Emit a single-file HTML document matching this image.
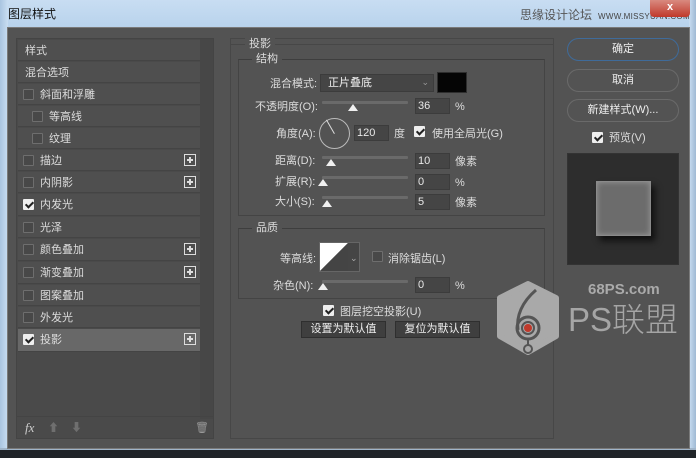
<!DOCTYPE html>
<html><head><meta charset="utf-8">
<style>
*{margin:0;padding:0;box-sizing:border-box}
body{width:696px;height:458px;overflow:hidden;background:#1c1c1c;font-family:"Liberation Sans","Noto Sans CJK SC",sans-serif;font-size:11px;color:#dcdcdc;position:relative}
.a{position:absolute}
.t{position:absolute;white-space:nowrap;line-height:14px}
.row{position:absolute;left:18px;width:182px;height:21px;background:#4f4f4f;border-bottom:1px solid #444}
.row span{position:absolute;top:4px;line-height:14px;white-space:nowrap}
.cb{position:absolute;width:11px;height:11px;border:1px solid #6e6e6e;background:#484848;border-radius:1px}
.cb.on{background:#eee;border-color:#eee}
.cb.on:after{content:"";position:absolute;left:3px;top:0px;width:3px;height:6px;border:solid #222;border-width:0 2px 2px 0;transform:rotate(45deg)}
.plus{position:absolute;right:4px;top:4px;width:12px;height:12px;border:1px solid #ddd}
.plus:before{content:"";position:absolute;left:2px;top:4px;width:6px;height:2px;background:#ddd}
.plus:after{content:"";position:absolute;left:4px;top:2px;width:2px;height:6px;background:#ddd}
.inp{position:absolute;background:#454545;border:1px solid #3c3c3c;height:16px;width:37px;line-height:14px;padding-left:2px;color:#e8e8e8}
.track{position:absolute;height:3px;background:#6a6a6a;width:86px;border-radius:1px}
.knob{position:absolute;width:0;height:0;border-left:5px solid transparent;border-right:5px solid transparent;border-bottom:7px solid #f0f0f0}
.btn{position:absolute;left:567px;width:112px;height:23px;border:1px solid #6a6a6a;border-radius:12px;text-align:center;line-height:21px;color:#eee}
.fs{position:absolute;border:1px solid #444;border-top-color:#3e3e3e}
.leg{position:absolute;background:#535353;padding:0 4px;line-height:14px}
.gb{position:absolute;height:17px;background:#3f3f3f;border:1px solid #2f2f2f;text-align:center;line-height:15px;color:#eee}
</style></head><body>
<div class="a" style="left:0;top:0;width:696px;height:30px;background:linear-gradient(#c8ddf2,#b7d2ec)"></div>
<div class="a" style="left:0;top:0;width:8px;height:452px;background:linear-gradient(90deg,#a9c4e0,#c9def2)"></div>
<div class="a" style="left:689px;top:0;width:7px;height:452px;background:linear-gradient(90deg,#c9def2,#9fb9d4)"></div>
<div class="a" style="left:0;top:448px;width:696px;height:10px;background:#202428;border-top:2px solid #9fb4c9"></div>
<div class="t" style="left:8px;top:7px;color:#111;font-size:12px">图层样式</div>
<div class="t" style="left:520px;top:8px;color:#555;font-size:12px">思缘设计论坛</div>
<div class="t" style="left:598px;top:10px;color:#444;font-size:8px;letter-spacing:0.3px">WWW.MISSYUAN.COM</div>
<div class="a" style="left:650px;top:0;width:40px;height:17px;background:linear-gradient(#d98a80,#c0392b);border-radius:0 0 4px 4px;color:#fff;text-align:center;font-weight:bold;line-height:15px">x</div>
<div class="a" style="left:7px;top:27px;width:683px;height:422px;background:#535353;border:1px solid #7a7a7a"></div>
<div class="a" style="left:16px;top:38px;width:198px;height:401px;background:#4a4a4a;border:1px solid #444"></div>
<div class="a" style="left:200px;top:39px;width:13px;height:380px;background:#474747"></div>
<div class="row" style="top:40px"><span style="left:7px">样式</span></div>
<div class="row" style="top:62px"><span style="left:7px">混合选项</span></div>
<div class="row" style="top:84px"><i class="cb" style="left:5px;top:5px"></i><span style="left:22px">斜面和浮雕</span></div>
<div class="row" style="top:106px"><i class="cb" style="left:14px;top:5px"></i><span style="left:31px">等高线</span></div>
<div class="row" style="top:128px"><i class="cb" style="left:14px;top:5px"></i><span style="left:31px">纹理</span></div>
<div class="row" style="top:150px"><i class="cb" style="left:5px;top:5px"></i><span style="left:22px">描边</span><i class="plus"></i></div>
<div class="row" style="top:172px"><i class="cb" style="left:5px;top:5px"></i><span style="left:22px">内阴影</span><i class="plus"></i></div>
<div class="row" style="top:194px;height:22px"><i class="cb on" style="left:5px;top:5px"></i><span style="left:22px">内发光</span></div>
<div class="row" style="top:217px"><i class="cb" style="left:5px;top:5px"></i><span style="left:22px">光泽</span></div>
<div class="row" style="top:239px;height:22px"><i class="cb" style="left:5px;top:5px"></i><span style="left:22px">颜色叠加</span><i class="plus"></i></div>
<div class="row" style="top:262px;height:22px"><i class="cb" style="left:5px;top:5px"></i><span style="left:22px">渐变叠加</span><i class="plus"></i></div>
<div class="row" style="top:285px"><i class="cb" style="left:5px;top:5px"></i><span style="left:22px">图案叠加</span></div>
<div class="row" style="top:307px"><i class="cb" style="left:5px;top:5px"></i><span style="left:22px">外发光</span></div>
<div class="row" style="top:329px;height:23px;background:#686868"><i class="cb on" style="left:5px;top:5px"></i><span style="left:22px">投影</span><i class="plus"></i></div>
<div class="a" style="left:17px;top:416px;width:196px;height:1px;background:#444"></div>
<div class="t" style="left:25px;top:421px;font-style:italic;font-family:'Liberation Serif',serif;font-size:13px;color:#ccc">fx</div>
<div class="t" style="left:48px;top:421px;color:#6f6f6f;font-size:11px">⬆</div>
<div class="t" style="left:71px;top:421px;color:#6f6f6f;font-size:11px">⬇</div>
<div class="t" style="left:195px;top:421px;color:#999;font-size:11px">🗑</div>
<div class="a" style="left:230px;top:38px;width:324px;height:401px;border:1px solid #474747"></div>
<div class="a" style="left:230px;top:44px;width:324px;height:1px;background:#474747"></div>
<div class="leg" style="left:245px;top:37px">投影</div>
<div class="fs" style="left:238px;top:59px;width:307px;height:157px"></div>
<div class="leg" style="left:252px;top:52px">结构</div>
<div class="t" style="left:270px;top:77px">混合模式:</div>
<div class="a" style="left:320px;top:74px;width:114px;height:18px;background:#454545;border:1px solid #3c3c3c"><span class="t" style="left:7px;top:1px;color:#eee">正片叠底</span><span class="t" style="right:4px;top:0;color:#999;font-size:9px">⌄</span></div>
<div class="a" style="left:437px;top:72px;width:30px;height:21px;background:#050505;border:1px solid #2e2e2e"></div>
<div class="t" style="left:255px;top:100px">不透明度(O):</div>
<div class="track" style="left:322px;top:101px"></div>
<div class="knob" style="left:348px;top:104px"></div>
<div class="inp" style="left:415px;top:98px;width:35px">36</div>
<div class="t" style="left:455px;top:100px">%</div>
<div class="t" style="left:276px;top:127px">角度(A):</div>
<div class="a" style="left:319px;top:118px;width:31px;height:31px;border:1px solid #bbb;border-radius:50%"></div>
<div class="a" style="left:334px;top:118px;width:1px;height:16px;background:#ddd;transform-origin:0 100%;transform:rotate(-30deg)"></div>
<div class="inp" style="left:354px;top:125px;width:35px">120</div>
<div class="t" style="left:394px;top:127px">度</div>
<i class="cb on" style="left:414px;top:126px"></i>
<div class="t" style="left:432px;top:127px">使用全局光(G)</div>
<div class="t" style="left:275px;top:154px">距离(D):</div>
<div class="track" style="left:322px;top:156px"></div>
<div class="knob" style="left:326px;top:159px"></div>
<div class="inp" style="left:415px;top:153px;width:35px">10</div>
<div class="t" style="left:455px;top:155px">像素</div>
<div class="t" style="left:275px;top:175px">扩展(R):</div>
<div class="track" style="left:322px;top:176px"></div>
<div class="knob" style="left:318px;top:179px"></div>
<div class="inp" style="left:415px;top:174px;width:35px">0</div>
<div class="t" style="left:455px;top:176px">%</div>
<div class="t" style="left:275px;top:195px">大小(S):</div>
<div class="track" style="left:322px;top:196px"></div>
<div class="knob" style="left:322px;top:200px"></div>
<div class="inp" style="left:415px;top:194px;width:35px">5</div>
<div class="t" style="left:455px;top:196px">像素</div>
<div class="fs" style="left:238px;top:228px;width:307px;height:71px"></div>
<div class="leg" style="left:252px;top:221px">品质</div>
<div class="t" style="left:280px;top:252px">等高线:</div>
<div class="a" style="left:319px;top:242px;width:41px;height:30px;border:1px solid #666;background:#454545"></div>
<svg class="a" style="left:320px;top:243px" width="28" height="28"><polygon points="0,0 28,0 0,28" fill="#fff"/><polygon points="28,0 28,28 0,28" fill="#444"/></svg>
<div class="t" style="left:350px;top:251px;color:#aaa;font-size:9px">⌄</div>
<i class="cb" style="left:372px;top:251px"></i>
<div class="t" style="left:388px;top:252px">消除锯齿(L)</div>
<div class="t" style="left:273px;top:279px">杂色(N):</div>
<div class="track" style="left:322px;top:280px"></div>
<div class="knob" style="left:318px;top:283px"></div>
<div class="inp" style="left:415px;top:277px;width:35px">0</div>
<div class="t" style="left:455px;top:279px">%</div>
<i class="cb on" style="left:323px;top:305px"></i>
<div class="t" style="left:340px;top:305px">图层挖空投影(U)</div>
<div class="gb" style="left:301px;top:321px;width:85px">设置为默认值</div>
<div class="gb" style="left:395px;top:321px;width:85px">复位为默认值</div>
<div class="btn" style="top:38px;border-color:#3f6b9a">确定</div>
<div class="btn" style="top:69px">取消</div>
<div class="btn" style="top:99px">新建样式(W)...</div>
<i class="cb on" style="left:592px;top:132px"></i>
<div class="t" style="left:609px;top:131px">预览(V)</div>
<div class="a" style="left:567px;top:153px;width:112px;height:112px;background:#2d2d2d;border:1px solid #333"></div>
<div class="a" style="left:596px;top:181px;width:55px;height:55px;background:#6c6c6c;border:1px solid #8a8a8a;box-shadow:4px 5px 6px #111, inset 0 0 6px #999"></div>
<svg class="a" style="left:494px;top:280px" width="70" height="80">
<polygon points="34,4 62,18 62,56 34,72 6,56 6,18" fill="#a9a9a9" stroke="#a9a9a9" stroke-width="6" stroke-linejoin="round"/>
<path d="M42,10 C28,22 22,36 24,50" stroke="#555" stroke-width="3" fill="none"/>
<circle cx="34" cy="48" r="11" stroke="#555" stroke-width="3" fill="none"/>
<circle cx="34" cy="48" r="6" stroke="#555" stroke-width="2" fill="none"/>
<circle cx="34" cy="48" r="4" fill="#c0392b"/>
<line x1="34" y1="59" x2="34" y2="65" stroke="#555" stroke-width="2"/>
<circle cx="34" cy="69" r="4" stroke="#555" stroke-width="2" fill="#a9a9a9"/>
</svg>
<div class="t" style="left:588px;top:283px;font-size:15px;font-weight:bold;color:#aaa">68PS.com</div>
<div class="t" style="left:568px;top:300px;font-size:33px;line-height:40px;color:#a5a5a5;font-weight:300">PS联盟</div>
</body></html>
